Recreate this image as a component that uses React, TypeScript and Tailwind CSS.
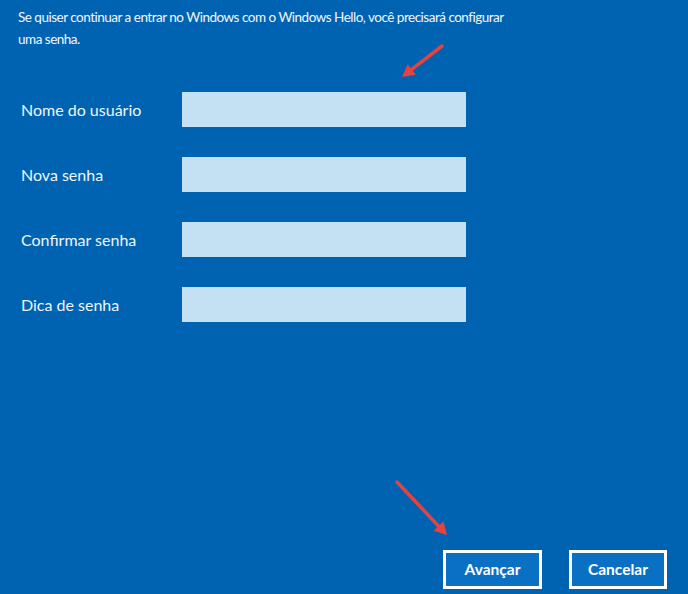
import React from "react";

const fields = ["Nome do usuário", "Nova senha", "Confirmar senha", "Dica de senha"];

function Arrow({ x1, y1, x2, y2 }: { x1: number; y1: number; x2: number; y2: number }) {
  const ang = Math.atan2(y2 - y1, x2 - x1);
  const len = 14;
  const spread = 0.5;
  const ax = x2 - len * Math.cos(ang - spread);
  const ay = y2 - len * Math.sin(ang - spread);
  const bx = x2 - len * Math.cos(ang + spread);
  const by = y2 - len * Math.sin(ang + spread);
  const mx = x2 - 9 * Math.cos(ang);
  const my = y2 - 9 * Math.sin(ang);
  return (
    <g>
      <line x1={x1} y1={y1} x2={mx} y2={my} stroke="#e8423f" strokeWidth={3.5} strokeLinecap="round" />
      <polygon points={`${x2},${y2} ${ax},${ay} ${bx},${by}`} fill="#e8423f" />
    </g>
  );
}

export default function App() {
  return (
    <div
      className="relative w-[688px] h-[594px] bg-[#0063b1] text-white flex flex-col overflow-hidden"
      style={{ fontFamily: 'Lato, "Noto Sans", sans-serif' }}
    >
      <p className="ml-[18px] w-[495px] pt-[6px] text-[13.5px] tracking-[-0.5px] leading-[22px] text-[#f2f7fb]">
        Se quiser continuar a entrar no Windows com o Windows Hello, você precisará configurar uma senha.
      </p>
      <div className="mt-[42px] pl-[21px] grid grid-cols-[161px_284px] gap-y-[30px]">
        {fields.map((f) => (
          <React.Fragment key={f}>
            <div className="h-[35px] flex items-center text-[16px] text-[#eef5fb]">{f}</div>
            <div className="h-[35px] bg-[#c4e1f3]" />
          </React.Fragment>
        ))}
      </div>
      <div className="mt-auto flex justify-end gap-[27px] pr-[21px] pb-[5px]">
        <button className="w-[99px] h-[39px] border-[3px] border-white bg-[#0a70c4] text-[15.5px] font-bold text-white">
          Avançar
        </button>
        <button className="w-[98px] h-[39px] border-[3px] border-white bg-[#0a70c4] text-[15.5px] font-bold text-white">
          Cancelar
        </button>
      </div>
      <svg className="absolute inset-0 pointer-events-none" width={688} height={594}>
        <Arrow x1={442} y1={46} x2={402} y2={77} />
        <Arrow x1={397} y1={482} x2={447} y2={535} />
      </svg>
    </div>
  );
}
